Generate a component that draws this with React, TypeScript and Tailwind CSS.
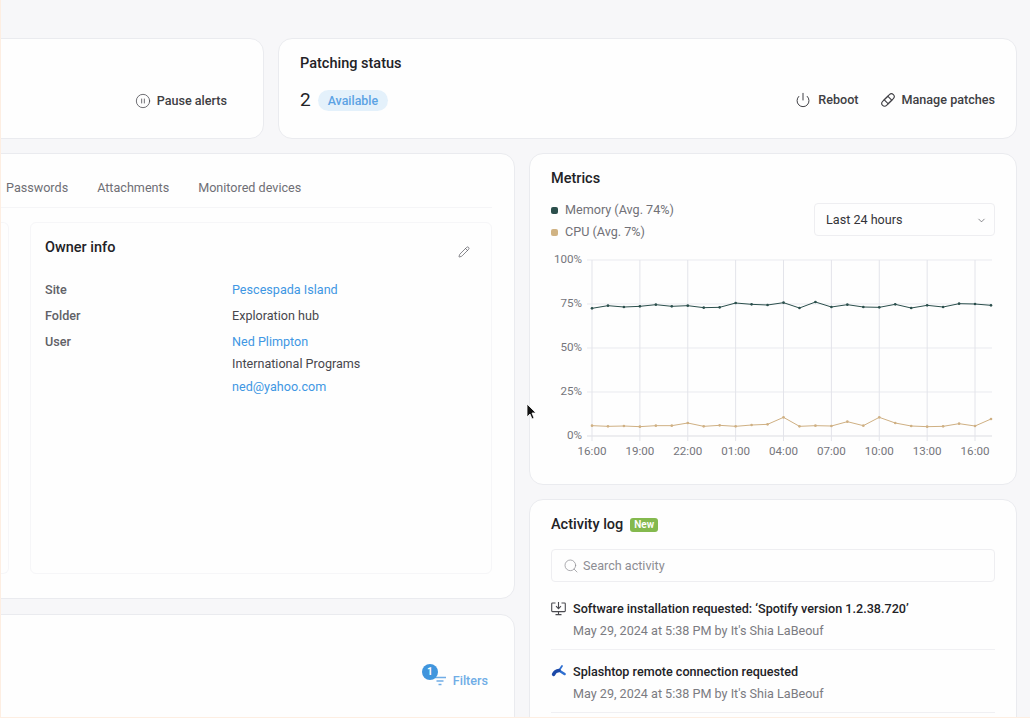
import React from 'react';
import { CirclePause, Power, Pencil, Search, ChevronDown } from 'lucide-react';

const memory = [187, 179, 183, 181, 176, 181, 179, 185, 184, 171, 175, 177, 170, 186, 168, 183, 176, 183, 184, 175, 186, 178, 183, 173, 174, 178];
const cpu = [539, 541, 540, 542, 539, 539, 531, 541, 538, 541, 537, 535, 514, 541, 539, 540, 527, 539, 514, 531, 540, 542, 541, 533, 540, 519];
const xLabels = ['16:00', '19:00', '22:00', '01:00', '04:00', '07:00', '10:00', '13:00', '16:00'];
const yLabels = [['100%', 259], ['75%', 303], ['50%', 347], ['25%', 391], ['0%', 435]] as const;

// chart is drawn in page coordinates, shifted by the svg's own origin
const px = (i: number) => 41 + i * 15.96;
const py = (v: number) => 245 + v / 3 - 250;

const Line = ({ data, color }: { data: number[]; color: string }) => (
  <>
    <polyline points={data.map((v, i) => `${px(i)},${py(v)}`).join(' ')} fill="none" stroke={color} strokeWidth="1" />
    {data.map((v, i) => (
      <circle key={i} cx={px(i)} cy={py(v)} r="1.3" fill={color} />
    ))}
  </>
);

const Chart = () => (
  <svg width="444" height="212" className="block">
    {yLabels.map(([label, y]) => (
      <g key={label}>
        <line x1="36" x2="441" y1={y - 250} y2={y - 250} stroke={label === '0%' ? '#dcdde2' : '#e9eaef'} />
        <text x="31" y={y - 250 + 3} textAnchor="end" fontSize="11.6" fill="#75757b">{label}</text>
      </g>
    ))}
    {xLabels.map((label, i) => (
      <g key={i}>
        <line x1={px(i * 3)} x2={px(i * 3)} y1="9" y2="190" stroke="#e3e4ea" />
        <text x={px(i * 3)} y="204" textAnchor="middle" fontSize="11.6" fill="#75757b">{label}</text>
      </g>
    ))}
    <Line data={cpu} color="#cfb083" />
    <Line data={memory} color="#2b4f4c" />
  </svg>
);

const BandageIcon = () => (
  <svg width="16" height="16" viewBox="0 0 16 16" fill="none" stroke="#3f3f44" strokeWidth="1.1">
    <g transform="rotate(-45 8 8)">
      <rect x="0.4" y="5.200" width="15.2" height="5.6" rx="2.8" />
      <rect x="5.4" y="5.200" width="5.200" height="5.6" />
    </g>
  </svg>
);

const InstallIcon = () => (
  <svg width="15" height="15" viewBox="0 0 15 15" fill="none" stroke="#4a4a50" strokeWidth="1.1">
    <path d="M4.5 2H1.5a.8.8 0 0 0-.8.8v7a.8.8 0 0 0 .8.8h12a.8.8 0 0 0 .8-.8v-7a.8.8 0 0 0-.8-.8h-3" />
    <path d="M7.5 1v6.5M5 5.2l2.5 2.5L10 5.2M7.5 10.6v3M4.5 13.6h6" />
  </svg>
);

const SplashtopIcon = () => (
  <svg width="15" height="14" viewBox="0 0 15 14" fill="none" strokeLinecap="round">
    <path d="M8 6.500L11 2" stroke="#2f6fd0" strokeWidth="1.8" />
    <path d="M8 6.500L13.500 10" stroke="#2f6fd0" strokeWidth="2.6" />
    <path d="M2.500 10.500C3.500 8 5.500 6.700 8 6.500" stroke="#1c49a8" strokeWidth="3.4" />
  </svg>
);

const LogRow = ({ icon, title }: { icon: React.ReactNode; title: string }) => (
  <div className="flex gap-[7px] h-[63px] pt-[12px] border-b border-[#f0f0f3]">
    <div className="w-[15px] pt-[2px] shrink-0">{icon}</div>
    <div>
      <div className="text-[12.6px] leading-[20px] font-medium text-[#222226]">{title}</div>
      <div className="text-[12.6px] leading-[20px] mt-[2px] text-[#7b7b81]">May 29, 2024 at 5:38 PM by It's Shia LaBeouf</div>
    </div>
  </div>
);

const OwnerRow = ({ label, children }: { label: string; children: React.ReactNode }) => (
  <div className="flex text-[12.6px] leading-[20px]">
    <div className="w-[187px] font-medium text-[#616167]">{label}</div>
    <div>{children}</div>
  </div>
);

const cardClass = 'bg-[#fefefe] border border-[#eaebef] rounded-[14px]';

export default function App() {
  return (
    <div className="relative w-[1030px] h-[718px] overflow-hidden bg-[#f7f7f9] border-l border-b border-[#fdeee2] pt-[38px] flex flex-col gap-[14px]" style={{ fontFamily: 'Roboto, sans-serif' }}>
      <div className="flex gap-[14px] h-[101px] shrink-0">
        <div className={`${cardClass} w-[300px] ml-[-37px] shrink-0 flex items-center justify-end pr-[36px] pt-[25px] gap-[6px]`}>
          <CirclePause size={16} strokeWidth={1.2} className="text-[#4a4a50]" />
          <span className="text-[12.6px] font-medium text-[#3f3f44]">Pause alerts</span>
        </div>
        <div className={`${cardClass} w-[739px] shrink-0 pl-[21px] pr-[21px] pt-[15px]`}>
          <div className="text-[14.5px] leading-[20px] font-medium text-[#222226]">Patching status</div>
          <div className="flex items-center justify-between mt-[14px]">
            <div className="flex items-center gap-[7px]">
              <span className="text-[19px] leading-[24px] text-[#222226]">2</span>
              <span className="h-[21px] px-[10px] rounded-full bg-[#e4f1fb] text-[#5ca3e4] text-[12.4px] font-medium leading-[21px]">Available</span>
            </div>
            <div className="flex items-center">
              <Power size={16} strokeWidth={1.4} className="text-[#333338]" />
              <span className="ml-[7px] text-[12.6px] font-medium text-[#3f3f44]">Reboot</span>
              <span className="ml-[21px]"><BandageIcon /></span>
              <span className="ml-[6px] text-[12.6px] font-medium text-[#3f3f44]">Manage patches</span>
            </div>
          </div>
        </div>
      </div>

      <div className="flex gap-[14px] shrink-0">
        <div className="flex flex-col gap-[15px] w-[551px] ml-[-37px] shrink-0">
          <div className={`${cardClass} h-[446px] pl-[22px] pr-[22px] pt-[24px]`}>
            <div className="flex pl-[19px] gap-[29px] h-[30px] border-b border-[#f5f5f7] text-[12.6px] leading-[20px] text-[#6f6f75]">
              <span>Passwords</span>
              <span>Attachments</span>
              <span>Monitored devices</span>
            </div>
            <div className="flex gap-[21px] mt-[14px]">
              <div className="w-[44px] ml-[-22px] h-[352px] border border-l-0 border-[#f6f6f8] rounded-r-[6px] shrink-0" />
              <div className="flex-1 h-[352px] border border-[#f6f6f8] rounded-[6px] pl-[14px] pr-[21px] pt-[15px]">
                <div className="flex items-center justify-between">
                  <span className="text-[14.5px] leading-[20px] font-medium text-[#222226]">Owner info</span>
                  <Pencil size={12} strokeWidth={1.4} className="text-[#55555b] mt-[8px]" />
                </div>
                <div className="mt-[22px] flex flex-col gap-[6px]">
                  <OwnerRow label="Site"><span className="text-[#3f97e3]">Pescespada Island</span></OwnerRow>
                  <OwnerRow label="Folder"><span className="text-[#47474d]">Exploration hub</span></OwnerRow>
                  <OwnerRow label="User">
                    <div className="text-[#3f97e3]">Ned Plimpton</div>
                    <div className="text-[#47474d] mt-[2px]">International Programs</div>
                    <div className="text-[#3f97e3] mt-[3px]">ned@yahoo.com</div>
                  </OwnerRow>
                </div>
              </div>
            </div>
          </div>
          <div className={`${cardClass} h-[200px] flex justify-end pr-[26px] pt-[56px]`}>
            <div className="relative flex items-center h-[20px] text-[#70ade6] text-[12.6px] font-medium gap-[7px]">
              <span className="absolute left-[-12px] top-[-7px] w-[16px] h-[16px] rounded-full bg-[#4095dd] text-white text-[10px] font-bold leading-[16px] text-center">1</span>
              <svg width="12" height="10" viewBox="0 0 12 10" fill="none" stroke="#70ade6" strokeWidth="1.4">
                <path d="M0 1.5h12M2.500 5h7M4.500 8.500h3" />
              </svg>
              <span>Filters</span>
            </div>
          </div>
        </div>

        <div className="flex flex-col gap-[14px] w-[488px] shrink-0">
          <div className={`${cardClass} h-[332px] pl-[21px] pr-[21px] pt-[15px]`}>
            <div className="text-[14.5px] leading-[20px] font-medium text-[#222226]">Metrics</div>
            <div className="flex justify-between mt-[11px]">
              <div className="flex flex-col gap-[2px] text-[12.6px] leading-[20px] text-[#717177]">
                <div className="flex items-center gap-[7px]"><span className="w-[7px] h-[7px] rounded-[2px] bg-[#2b4f4c]" />Memory (Avg. 74%)</div>
                <div className="flex items-center gap-[7px]"><span className="w-[7px] h-[7px] rounded-[2px] bg-[#d0b383]" />CPU (Avg. 7%)</div>
              </div>
              <div className="w-[181px] h-[33px] mt-[3px] pt-[1px] border border-[#eeeef1] rounded-[4px] flex items-center justify-between pl-[11px] pr-[7px] text-[12.6px] text-[#333338]">
                Last 24 hours
                <ChevronDown size={11} strokeWidth={1.5} className="text-[#55555b]" />
              </div>
            </div>
            <div className="mt-[9px]">
              <Chart />
            </div>
          </div>

          <div className={`${cardClass} h-[260px] pl-[21px] pr-[21px] pt-[15px]`}>
            <div className="flex items-center gap-[7px]">
              <span className="text-[14.5px] leading-[20px] font-medium text-[#222226]">Activity log</span>
              <span className="h-[14px] px-[4px] rounded-[3px] bg-[#84b94e] text-white text-[10px] font-semibold leading-[14px]">New</span>
            </div>
            <div className="mt-[14px] h-[33px] pt-[1px] border border-[#eeeef1] rounded-[4px] flex items-center pl-[11px] gap-[4px] text-[12.6px] text-[#8d8d93]">
              <Search size={16} strokeWidth={1.1} className="text-[#8d8d93]" />
              Search activity
            </div>
            <div className="mt-[5px]">
              <LogRow icon={<InstallIcon />} title="Software installation requested: ‘Spotify version 1.2.38.720’" />
              <LogRow icon={<SplashtopIcon />} title="Splashtop remote connection requested" />
            </div>
          </div>
        </div>
      </div>

      {/* mouse cursor from the recording */}
      <svg className="absolute left-[525px] top-[403px]" width="12" height="18" viewBox="0 0 12 18">
        <path d="M1 1v13l3-3 2 5 2-1-2-5h4z" fill="#111" stroke="#fff" strokeWidth="0.8" />
      </svg>
    </div>
  );
}
